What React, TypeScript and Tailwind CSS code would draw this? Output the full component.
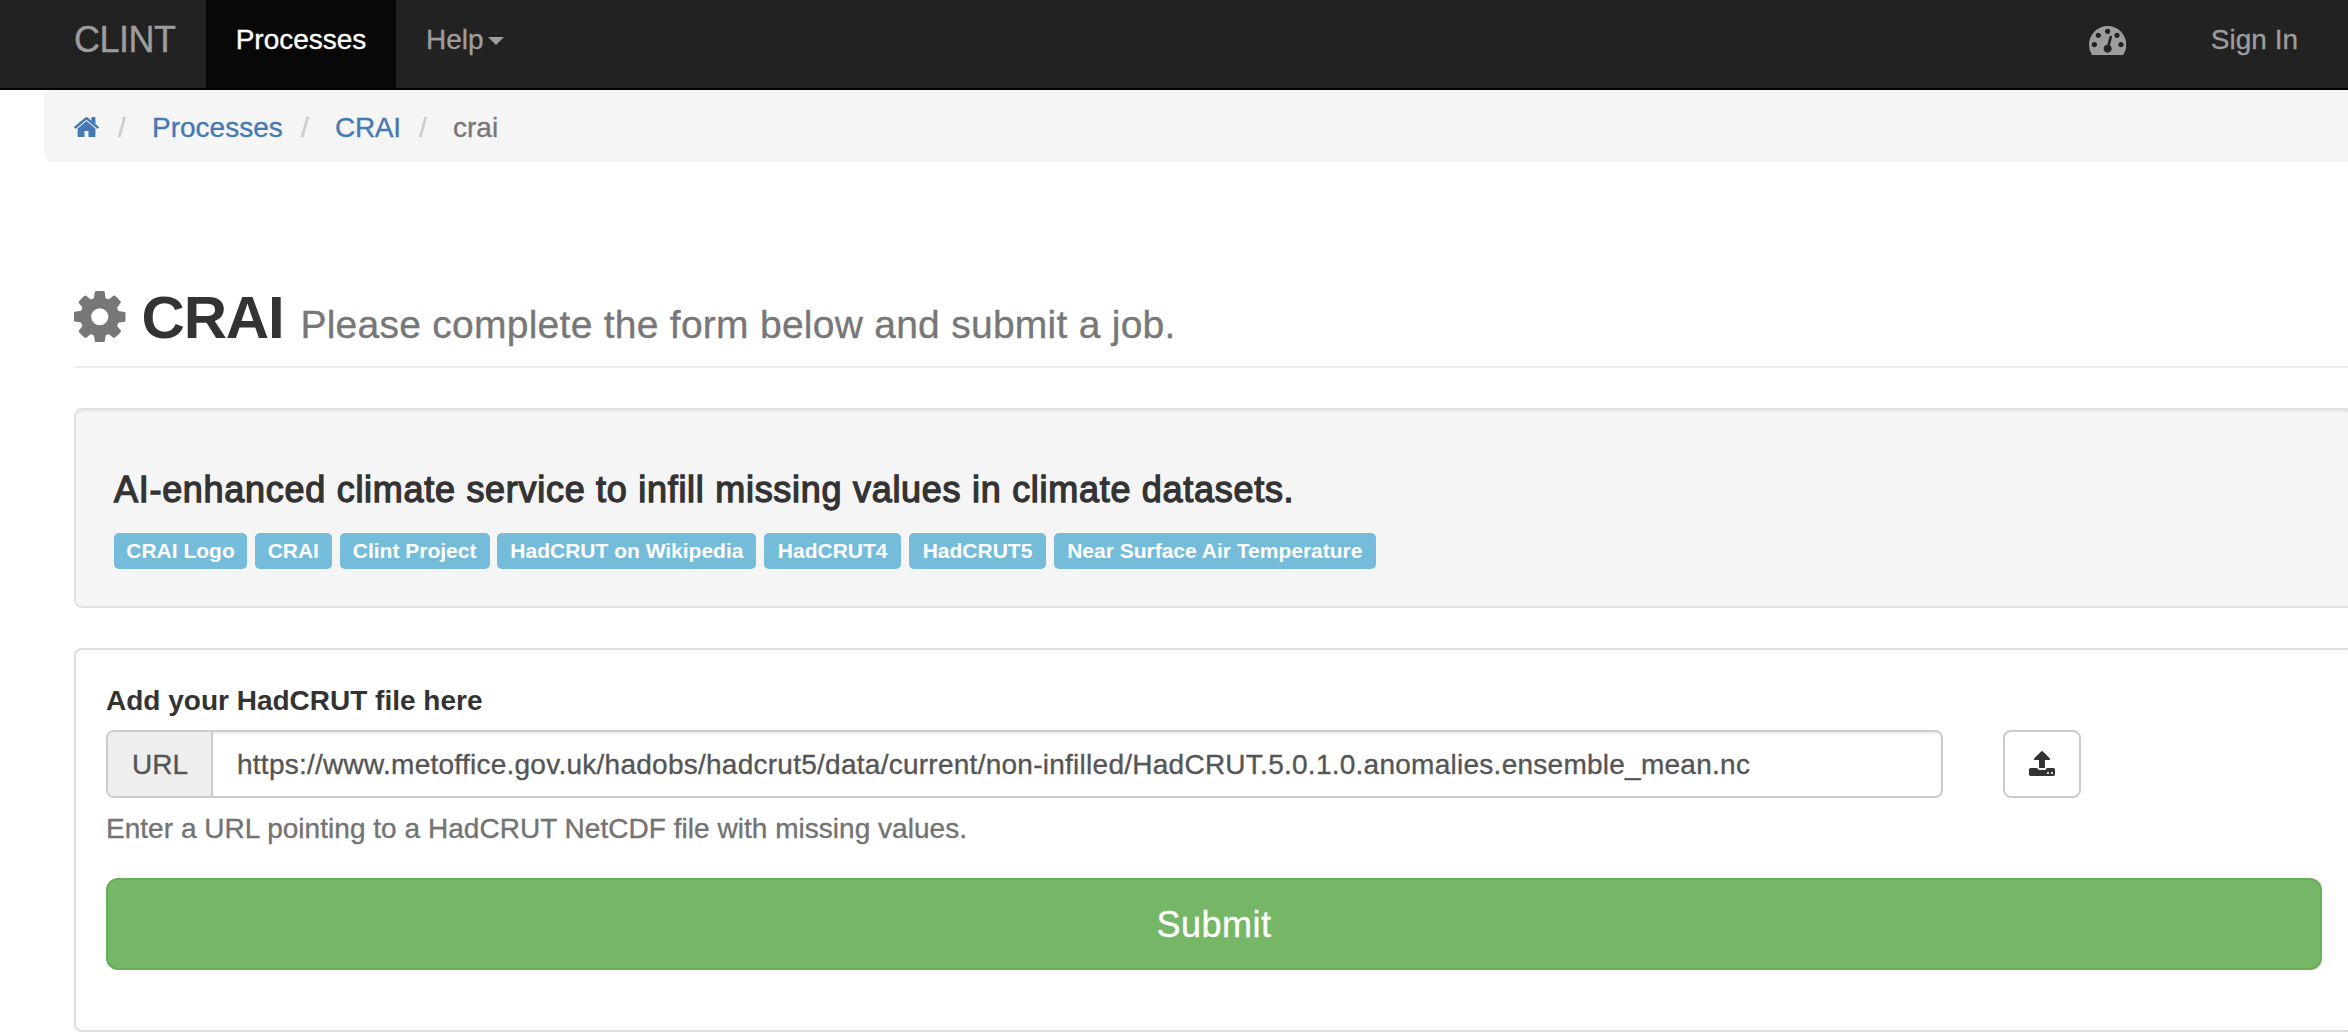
import type { ReactNode } from "react";

function HomeIcon({ className }: { className?: string }) {
  return (
    <svg viewBox="89 253 1614 1283" className={className} fill="currentColor" aria-hidden="true">
      <path d="M1472 992v480q0 26-19 45t-45 19h-384v-384h-256v384h-384q-26 0-45-19t-19-45v-480q0-1 .5-3t.5-3l575-474 575 474q1 2 1 6zm223-69l-62 74q-8 9-21 11h-3q-13 0-21-7l-692-577-692 577q-12 8-24 7-13-2-21-11l-62-74q-8-10-7-23.5t11-21.5l719-599q32-26 76-26t76 26l244 204v-195q0-14 9-23t23-9h192q14 0 23 9t9 23v408l219 182q10 8 11 21.5t-7 23.5z" />
    </svg>
  );
}

function GaugeIcon({ className }: { className?: string }) {
  return (
    <svg viewBox="0 256 1792 1408" className={className} fill="currentColor" aria-hidden="true">
      <path d="M384 1152q0-53-37.5-90.5t-90.5-37.5-90.5 37.5-37.5 90.5 37.5 90.5 90.5 37.5 90.5-37.5 37.5-90.5zm192-448q0-53-37.5-90.5t-90.5-37.5-90.5 37.5-37.5 90.5 37.5 90.5 90.5 37.5 90.5-37.5 37.5-90.5zm428 481l101-382q6-26-7.5-48.5t-38.5-29.5-48 6.5-30 39.5l-101 382q-60 5-107 43.5t-63 98.5q-20 77 20 146t117 89 146-20 89-117q16-60-6-117t-72-91zm660-33q0-53-37.5-90.5t-90.5-37.5-90.5 37.5-37.5 90.5 37.5 90.5 90.5 37.5 90.5-37.5 37.5-90.5zm-640-640q0-53-37.5-90.5t-90.5-37.5-90.5 37.5-37.5 90.5 37.5 90.5 90.5 37.5 90.5-37.5 37.5-90.5zm448 192q0-53-37.5-90.5t-90.5-37.5-90.5 37.5-37.5 90.5 37.5 90.5 90.5 37.5 90.5-37.5 37.5-90.5zm320 448q0 261-141 483-19 29-54 29h-1402q-35 0-54-29-141-221-141-483 0-182 71-348t191-286 286-191 348-71 348 71 286 191 191 286 71 348z" />
    </svg>
  );
}

function GearIcon({ className }: { className?: string }) {
  return (
    <svg viewBox="128 128 1536 1536" className={className} fill="currentColor" aria-hidden="true">
      <path d="M1152 896q0-106-75-181t-181-75-181 75-75 181 75 181 181 75 181-75 75-181zm512-109v222q0 12-8 23t-20 13l-185 28q-19 54-39 91 35 50 107 138 10 12 10 25t-9 23q-27 37-99 108t-94 71q-12 0-26-9l-138-108q-44 23-91 38-16 136-29 186-7 28-36 28h-222q-14 0-24.5-8.5t-11.5-21.5l-28-184q-49-16-90-37l-141 107q-10 9-25 9-14 0-25-11-126-114-165-168-7-10-7-23 0-12 8-23 15-21 51-66.5t54-70.5q-27-50-41-99l-183-27q-13-2-21-12.5t-8-23.5v-222q0-12 8-23t19-13l186-28q14-46 39-92-40-57-107-138-10-12-10-24 0-10 9-23 26-36 98.5-107.5t94.5-71.5q13 0 26 10l138 107q44-23 91-38 16-136 29-186 7-28 36-28h222q14 0 24.5 8.5t11.5 21.5l28 184q49 16 90 37l142-107q9-9 24-9 13 0 25 10 129 119 165 170 7 8 7 22 0 12-8 23-15 21-51 66.5t-54 70.5q26 50 41 98l183 28q13 2 21 12.5t8 23.5z" />
    </svg>
  );
}

function UploadIcon({ className }: { className?: string }) {
  return (
    <svg viewBox="64 64 1664 1600" className={className} fill="currentColor" aria-hidden="true">
      <path d="M1344 1472q0-26-19-45t-45-19-45 19-19 45 19 45 45 19 45-19 19-45zm256 0q0-26-19-45t-45-19-45 19-19 45 19 45 45 19 45-19 19-45zm128-224v320q0 40-28 68t-68 28h-1472q-40 0-68-28t-28-68v-320q0-40 28-68t68-28h427q21 56 70.5 92t110.5 36h256q61 0 110.5-36t70.5-92h427q40 0 68 28t28 68zm-325-648q-17 40-59 40h-256v448q0 26-19 45t-45 19h-256q-26 0-45-19t-19-45v-448h-256q-42 0-59-40-17-39 14-69l448-448q18-19 45-19t45 19l448 448q31 30 14 69z" />
    </svg>
  );
}

const tags = [
  { label: "CRAI Logo", width: "w-[133px]" },
  { label: "CRAI", width: "w-[77px]" },
  { label: "Clint Project", width: "w-[150px]" },
  { label: "HadCRUT on Wikipedia", width: "w-[259px]" },
  { label: "HadCRUT4", width: "w-[137px]" },
  { label: "HadCRUT5", width: "w-[137px]" },
  { label: "Near Surface Air Temperature", width: "w-[322px]" },
];

function Separator({ className }: { className: string }) {
  return <span className={`text-[#ccc] ${className}`}>/</span>;
}

function Navbar() {
  return (
    <nav className="flex h-[90px] border-b-2 border-[#030303] bg-[#222] pl-[74px] leading-10 text-[#9d9d9d]">
      <a href="#" className="w-[132px] pt-5 text-4xl leading-10 tracking-[-0.5px]">CLINT</a>
      <a href="#" className="w-[190px] bg-[#080808] pt-5 text-center text-white">Processes</a>
      <a href="#" className="flex pt-5 pl-[30px]">
        Help
        <span className="mt-[17px] ml-[4px] h-0 w-0 border-x-8 border-t-8 border-x-transparent border-t-[#9d9d9d]" />
      </a>
      <a href="#" className="mr-[85px] ml-auto pt-[26px]"><GaugeIcon className="h-[29.3px] w-[37.3px]" /></a>
      <a href="#" className="pt-5 pr-[50px]">Sign In</a>
    </nav>
  );
}

function Breadcrumb() {
  return (
    <div className="ml-11 flex h-[72px] rounded-l-lg bg-[#f5f5f5] pt-[18px] pl-[30px] leading-10 text-[#4679b2]">
      <a href="#" className="w-11 pt-[9px]"><HomeIcon className="h-5 w-[25px]" /></a>
      <Separator className="w-[34px]" />
      <a href="#" className="w-[149px]">Processes</a>
      <Separator className="w-[34px]" />
      <a href="#" className="w-[84px] tracking-[-0.3px]">CRAI</a>
      <Separator className="w-[34px]" />
      <span className="text-[#777]">crai</span>
    </div>
  );
}

function Heading({ title, children }: { title: string; children: ReactNode }) {
  return (
    <header className="flex h-[84px] items-baseline border-b-2 border-[#eee] pt-px leading-[66px] text-[#333]">
      <GearIcon className="-mb-[4px] size-[51.5px] translate-y-[4px] text-[#777]" />
      <h1 className="ml-[16px] text-[60px] font-bold tracking-[-1.2px] [-webkit-text-stroke:0]">{title}</h1>
      <small className="ml-[17px] text-[39px] tracking-[0.26px] text-[#777]">{children}</small>
    </header>
  );
}

export default function App() {
  return (
    <div className="h-[1032px] overflow-hidden bg-white font-['Liberation_Sans',Arial,sans-serif] text-[28px] [-webkit-text-stroke:0.35px]">
      <Navbar />
      <Breadcrumb />
      <main className="-mr-[6px] ml-[74px] pt-[122px]">
        <Heading title="CRAI">Please complete the form below and submit a job.</Heading>

        <section className="mt-10 h-[200px] rounded-lg border-2 border-[#e2e2e2] bg-[#f5f5f5] px-[38px] pt-[60px] shadow-[inset_0_2px_2px_rgba(0,0,0,0.05)]">
          <h4 className="text-4xl leading-10 font-normal tracking-[0.71px] text-[#333] [-webkit-text-stroke:1.3px]">
            AI-enhanced climate service to infill missing values in climate datasets.
          </h4>
          <div className="mt-[23px] flex gap-[7.8px] text-[21px] leading-9 font-bold text-white [-webkit-text-stroke:0]">
            {tags.map((tag) => (
              <a key={tag.label} href="#" className={`h-9 rounded-[5px] bg-[#75bcda] text-center whitespace-nowrap ${tag.width}`}>
                {tag.label}
              </a>
            ))}
          </div>
        </section>

        <form className="mt-10 h-96 rounded-lg border-2 border-[#ddd] px-[30px] pt-[30px] shadow-[0_2px_2px_rgba(0,0,0,0.05)]">
          <label htmlFor="dataset" className="block pt-px leading-10 font-bold text-[#333] [-webkit-text-stroke:0]">Add your HadCRUT file here</label>
          <div className="mt-[9px] flex h-[68px]">
            <div className="flex w-[1837px] overflow-hidden rounded-lg border-2 border-[#ccc] leading-[64px] text-[#555]">
              <span className="w-[105px] border-r-2 border-[#ccc] bg-[#eee] pt-px pl-[24px]">URL</span>
              <input
                id="dataset"
                readOnly
                className="min-w-0 flex-1 pt-px pl-[24px] tracking-[0.26px] shadow-[inset_0_2px_2px_rgba(0,0,0,0.075)] outline-none"
                value="https://www.metoffice.gov.uk/hadobs/hadcrut5/data/current/non-infilled/HadCRUT.5.0.1.0.anomalies.ensemble_mean.nc"
              />
            </div>
            <button type="button" aria-label="Upload" className="ml-[60px] w-[78px] rounded-lg border-2 border-[#ccc] pl-6 text-[#333]">
              <UploadIcon className="-mt-[1px] h-[25px] w-[26px]" />
            </button>
          </div>
          <p className="mt-[11px] leading-10 tracking-[0.03px] text-[#737373]">Enter a URL pointing to a HadCRUT NetCDF file with missing values.</p>
          <button type="button" className="mt-[29px] h-[92px] w-full rounded-xl border-2 border-[#69ad5a] bg-[#76b667] pt-px text-4xl leading-[88px] tracking-[0.5px] text-white">
            Submit
          </button>
        </form>
      </main>
    </div>
  );
}
